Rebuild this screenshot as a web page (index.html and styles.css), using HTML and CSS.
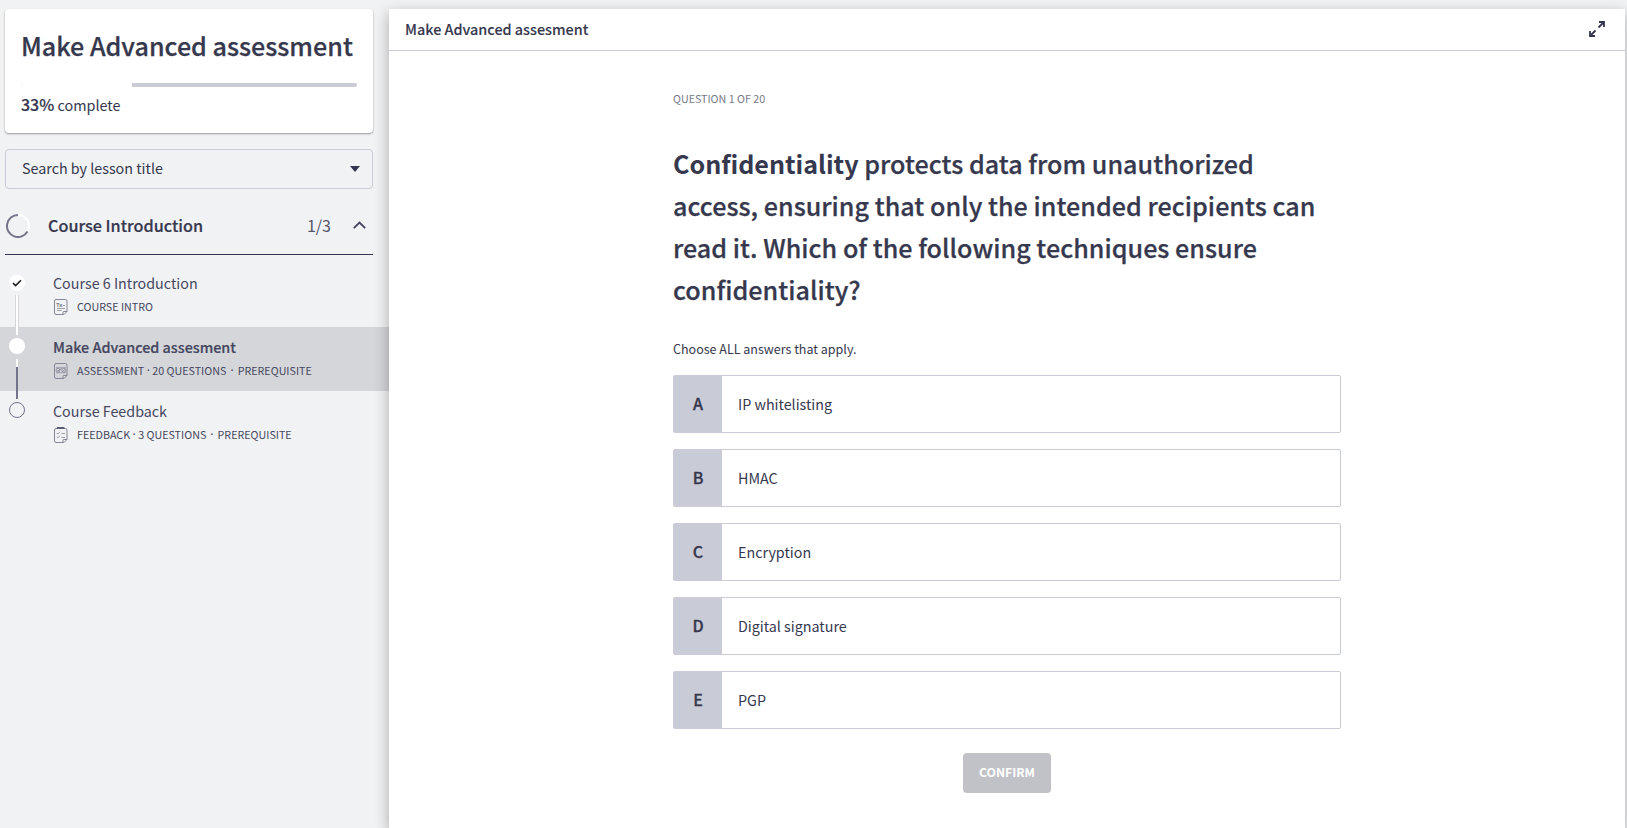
FILE: index.html
```html
<!DOCTYPE html>
<html lang="en">
<head>
<meta charset="utf-8">
<title>Make Advanced assessment</title>
<link rel="stylesheet" href="styles.css">
</head>
<body>
<div class="app">
  <aside class="sidebar">
    <section class="course-card">
      <h1 class="course-title">Make Advanced assessment</h1>
      <div class="progress"><div class="progress-done"></div></div>
      <p class="progress-text"><strong>33%</strong> complete</p>
    </section>
    <div class="search">
      <span>Search by lesson title</span>
      <svg class="caret" width="10" height="6" viewBox="0 0 10 6"><path d="M0 0h10L5 6z" fill="#34364f"/></svg>
    </div>
    <div class="chapter">
      <svg class="ring" width="24" height="24" viewBox="0 0 24 24" fill="none" stroke-width="2">
        <path d="M12 1A11 11 0 0 1 21.5 17.5" stroke="#fff"/>
        <path d="M21.5 17.5A11 11 0 1 1 12 1" stroke="#73748a"/>
      </svg>
      <h2 class="chapter-title">Course Introduction</h2>
      <span class="chapter-count">1/3</span>
      <svg width="13" height="8" viewBox="0 0 13 8" fill="none" stroke="#42445b" stroke-width="1.800"><path d="M.8 7.2 6.5 1.5l5.700 5.700"/></svg>
    </div>
    <ul class="lessons">
      <li class="lesson">
        <div class="track">
          <span class="dot dot-done"><svg width="10" height="8" viewBox="0 0 10 8" fill="none" stroke="#202124" stroke-width="1.6"><path d="M1 4.2 3.6 6.6 9 1.2"/></svg></span>
          <span class="line line-done"></span>
        </div>
        <div class="lesson-body">
          <div class="lesson-title">Course 6 Introduction</div>
          <div class="meta">
            <svg width="14" height="16" viewBox="0 0 14 16" fill="none" stroke="#858796">
              <path d="M9 15.500H2A1.500 1.500 0 0 1 .5 14V2A1.500 1.500 0 0 1 2 .5h9.500A1.500 1.500 0 0 1 13 2v10.500L10 15.500H9V13a.5.5 0 0 1 .5-.5H13"/>
              <path d="M9 6.500h2M3 9.500h8M3 11.500h4.500" stroke-width=".8"/>
              <text class="doc-letters" x="2.300" y="7.500">Tx</text>
            </svg>
            <span>COURSE INTRO</span>
          </div>
        </div>
      </li>
      <li class="lesson lesson-active">
        <div class="track track-next">
          <span class="dot dot-current"></span>
          <span class="line line-half"></span>
        </div>
        <div class="lesson-body">
          <div class="lesson-title">Make Advanced assesment</div>
          <div class="meta">
            <svg width="14" height="16" viewBox="0 0 14 16" fill="none" stroke="#858796">
              <path d="M9 15.500H2A1.500 1.500 0 0 1 .5 14V2A1.500 1.500 0 0 1 2 .5h9.500A1.500 1.500 0 0 1 13 2v10.500L10 15.500H9V13a.5.5 0 0 1 .5-.5H13"/>
              <path d="M2 4.700h10M2 9.700h10" stroke-width=".7"/>
              <circle cx="4" cy="7.200" r="1.900" stroke-width=".8"/><circle cx="9.700" cy="7.200" r="1.900" stroke-width=".8"/><path d="m3.200 7.200.7.7 3.800-2.400M9 7.200l.6.7 1.500-1.700" stroke-width=".8"/>
            </svg>
            <span>ASSESSMENT<i class="sep sep-tight">·</i>20 QUESTIONS<i class="sep">·</i>PREREQUISITE</span>
          </div>
        </div>
      </li>
      <li class="lesson">
        <div class="track track-next">
          <span class="dot dot-todo"></span>
        </div>
        <div class="lesson-body">
          <div class="lesson-title">Course Feedback</div>
          <div class="meta">
            <svg width="14" height="16" viewBox="0 0 14 16" fill="none" stroke="#858796">
              <path d="M9 15.500H2A1.500 1.500 0 0 1 .5 14V3A1.500 1.500 0 0 1 2 1.500h9.500A1.500 1.500 0 0 1 13 3v9.500L10 15.500H9V13a.5.5 0 0 1 .5-.5H13"/>
              <path d="M3 1h7.500" stroke="#5c5e73" stroke-width="2"/>
              <path d="m2.800 6 1.100 1.100L6 4.800M2.800 9.800l1.100 1.100L6 8.600M7.500 6.500h3.500M7.500 10.500h3.500" stroke-width=".8"/>
            </svg>
            <span>FEEDBACK<i class="sep sep-tight">·</i>3 QUESTIONS<i class="sep">·</i>PREREQUISITE</span>
          </div>
        </div>
      </li>
    </ul>
  </aside>
  <main class="panel">
    <header class="panel-header">
      <span>Make Advanced assesment</span>
      <svg width="16" height="16" viewBox="0 0 16 16" fill="none" stroke="#34364f" stroke-width="1.800">
        <path d="M10 1h5v5M15 1 9.500 6.500M6 15H1v-5M1 15l5.500-5.500"/>
      </svg>
    </header>
    <div class="quiz">
      <div class="counter">QUESTION 1 OF 20</div>
      <h2 class="question"><strong>Confidentiality</strong> protects data from unauthorized access, ensuring that only the intended recipients can read it. Which of the following techniques ensure confidentiality?</h2>
      <p class="hint">Choose ALL answers that apply.</p>
      <div class="options">
        <div class="option"><span class="letter">A</span><span class="answer">IP whitelisting</span></div>
        <div class="option"><span class="letter">B</span><span class="answer">HMAC</span></div>
        <div class="option"><span class="letter">C</span><span class="answer">Encryption</span></div>
        <div class="option"><span class="letter">D</span><span class="answer">Digital signature</span></div>
        <div class="option"><span class="letter">E</span><span class="answer">PGP</span></div>
      </div>
      <button class="confirm">CONFIRM</button>
    </div>
  </main>
</div>
</body>
</html>
```
FILE: styles.css
```css
* { box-sizing: border-box; }
html, body { height: 100%; }
body {
  margin: 0;
  overflow: hidden;
  background: #f1f2f4;
  color: #36384e;
  font: 14.3px/24px "Noto Sans CJK SC", "Noto Sans", sans-serif;
}
h1, h2, p, ul { margin: 0; padding: 0; font-weight: 500; }
svg { display: block; flex: none; }

.app { display: flex; height: 828px; padding: 9px 2px 0 0; }

/* Sidebar */
.sidebar { width: 389px; flex: none; }
.course-card {
  width: 368px;
  height: 124px;
  margin-left: 5px;
  padding: 18px 16px 0;
  background: #fff;
  border-radius: 4px;
  box-shadow: 0 1px 2px rgba(0, 0, 0, .38);
}
.course-title { font-size: 25.1px; line-height: 36px; white-space: nowrap; -webkit-text-stroke: .25px; }
.progress { height: 4px; margin-top: 20px; background: #c9cbd6; border-radius: 2px; overflow: hidden; }
.progress-done { width: 33%; height: 100%; background: #fff; }
.progress-text { margin-top: 5px; font-size: 14.4px; font-weight: 400; }
.progress-text strong { font-size: 16px; font-weight: 500; -webkit-text-stroke: .2px; }
.search {
  display: flex;
  align-items: center;
  justify-content: space-between;
  width: 368px;
  height: 40px;
  margin: 16px 0 0 5px;
  padding: 0 12px 2px 16px;
  border: 1px solid #c9cbd6;
  border-radius: 4px;
}
.caret { margin-top: 2px; }
.chapter {
  display: flex;
  align-items: center;
  width: 368px;
  height: 66px;
  margin-left: 5px;
  padding: 7px 7px 0 0;
  border-bottom: 1px solid #34364f;
}
.ring { margin: 2px 0 0 1px; }
.chapter-title { margin: 0 auto 0 18px; font-size: 16.2px; -webkit-text-stroke: .2px; }
.chapter-count { margin-right: 22px; font-size: 16px; color: #55576c; }

.lessons { margin-top: 8px; list-style: none; }
.lesson { display: flex; height: 64px; font-weight: 400; }
.lesson-active { background: #d5d6da; }
.track { display: flex; flex-direction: column; align-items: center; width: 16px; margin: 12px 0 0 9px; position: relative; z-index: 1; }
.track-next { margin-top: 11px; }
.dot { display: flex; align-items: center; justify-content: center; flex: none; width: 16px; height: 16px; border-radius: 50%; background: #fff; }
.dot-todo { border: 1px solid #73748a; background: transparent; }
.line { flex: none; width: 4px; height: 40px; margin-top: 4px; }
.line-done { width: 4px; border: solid #d5d6da; border-width: 0 1px; background: #fff; }
.line-half { width: 2px; margin-top: 5px; background: linear-gradient(#fff 8px, #73748a 8px); }
.lesson-body { margin-left: 28px; padding-top: 8px; color: #45475e; }
.lesson-active .lesson-title { font-size: 14.36px; font-weight: 500; -webkit-text-stroke: .2px; }
.meta { display: flex; align-items: center; gap: 9px; height: 16px; margin: 4px 0 0 1px; font-size: 10.72px; line-height: 16px; white-space: nowrap; }
.sep { display: inline-block; width: 11.3px; font: 12px/12px "Noto Sans", sans-serif; text-align: center; }
.sep-tight { width: 8px; }
.doc-letters { font: 700 5.500px "Noto Sans", sans-serif; fill: #777989; stroke: none; }

/* Lesson panel */
.panel { flex: 1; background: #fff; box-shadow: 0 5px 14px rgba(0, 0, 0, .3); }
.panel-header {
  display: flex;
  align-items: center;
  justify-content: space-between;
  height: 42px;
  padding: 0 20px 2px 16px;
  border-bottom: 1px solid #c9cbd6;
  font-size: 14.4px;
  font-weight: 500;
  -webkit-text-stroke: .1px;
}
.quiz { display: flex; flex-direction: column; width: 668px; margin: 38px auto 0; }
.counter { font-size: 10.7px; line-height: 20px; color: #777989; }
.question { margin-top: 33px; font-size: 25.1px; line-height: 42px; letter-spacing: .03px; -webkit-text-stroke: .25px; }
.question strong { font-weight: 700; letter-spacing: 0; -webkit-text-stroke: 0; }
.hint { margin-top: 29px; font-size: 12.5px; font-weight: 400; line-height: 20px; }
.options { display: grid; gap: 16px; margin-top: 16px; }
.option { display: flex; height: 58px; border: 1px solid #c9cbd6; border-radius: 2px; line-height: 56px; }
.letter { width: 48px; background: #c9cbd6; font-size: 16px; font-weight: 500; line-height: 54px; text-align: center; -webkit-text-stroke: .3px; }
.answer { margin-left: 16px; }
.confirm {
  align-self: center;
  width: 88px;
  height: 40px;
  margin-top: 24px;
  padding: 0 0 1px;
  border: 0;
  border-radius: 4px;
  background: #c1c2c8;
  color: #fff;
  font: 700 12.2px/39px "Noto Sans CJK SC", sans-serif;
}
```
